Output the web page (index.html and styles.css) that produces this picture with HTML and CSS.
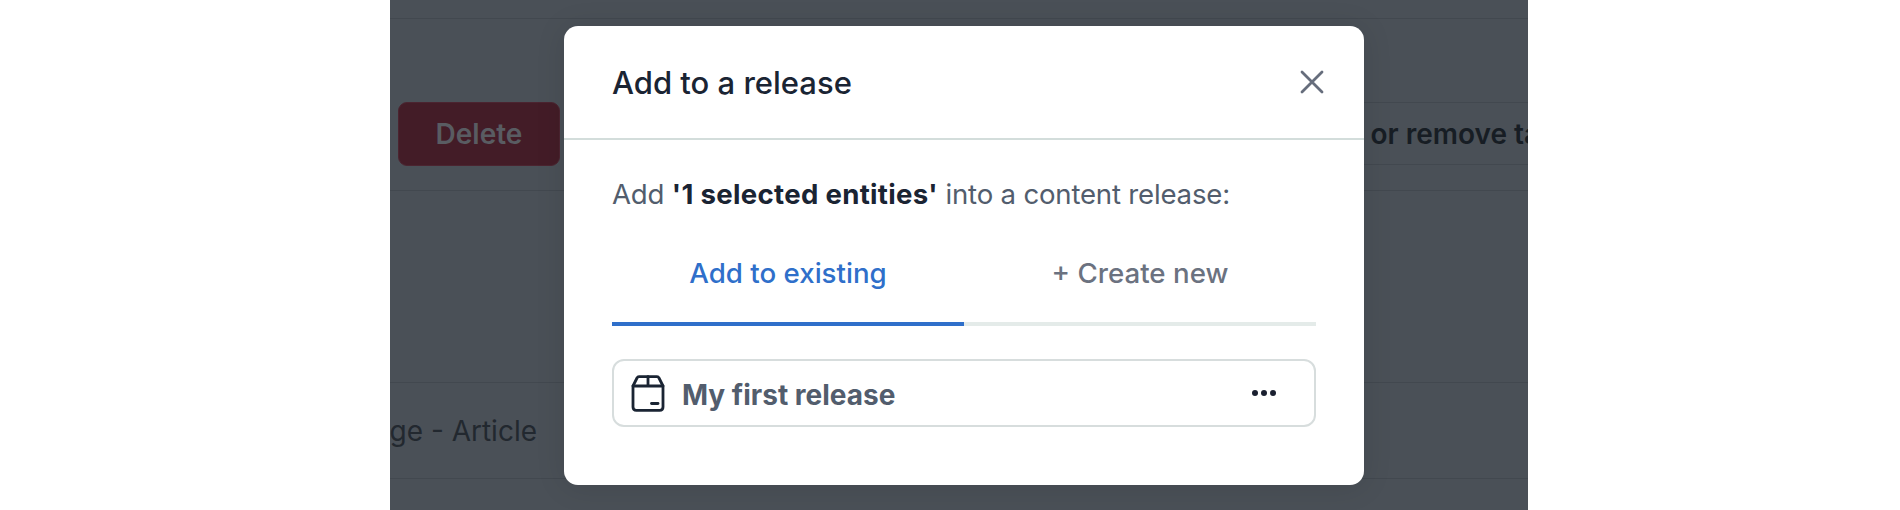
FILE: index.html
```html
<!DOCTYPE html>
<html lang="en">
<head>
<meta charset="utf-8">
<title>Add to a release</title>
<link rel="stylesheet" href="styles.css">
</head>
<body>
<div class="stage">
  <div class="rows">
    <div class="row row-a"></div>
    <div class="row row-b">
      <button class="delete">Delete</button>
      <button class="tags">Add or remove tags</button>
    </div>
    <div class="row row-c"></div>
    <div class="row row-d"><div class="cell"><span>Homepage - Article</span></div></div>
  </div>
  <div class="modal">
    <header class="modal-head">
      <h2>Add to a release</h2>
      <svg class="close" viewBox="0 0 24 24" fill="none" stroke="#666d7c" stroke-width="2.800" stroke-linecap="round"><path d="M2 2 22 22M22 2 2 22"/></svg>
    </header>
    <div class="modal-body">
      <p class="lead">Add <strong>'1 selected entities'</strong> into a content release:</p>
      <div class="tabs">
        <div class="tab active">Add to existing</div>
        <div class="tab">+ Create new</div>
      </div>
      <div class="release">
        <svg class="box" viewBox="0 0 34 37" fill="none" stroke="#1a2433" stroke-width="2.800" stroke-linejoin="round" stroke-linecap="round"><path d="M2 11 6 3Q6.600 1.600 8 1.600H26Q27.400 1.600 28 3L32 11V32Q32 35.400 28.600 35.400H5.400Q2 35.400 2 32Z"/><path d="M2 11H32M17 1.600V11"/><path d="M20.500 28.500H27"/></svg>
        <span class="name">My first release</span>
        <span class="dots"><i></i><i></i><i></i></span>
      </div>
    </div>
  </div>
</div>
</body>
</html>
```
FILE: styles.css
```css
* { box-sizing: border-box; }
html, body { margin: 0; height: 510px; background: #fff; overflow: hidden; }
body { font-family: Inter, "Liberation Sans", sans-serif; }
.stage {
  position: relative;
  width: 1138px;
  height: 510px;
  margin-left: 390px;
  background: #4a5057;
  overflow: hidden;
}
.rows { display: flex; flex-direction: column; }
.row { border-bottom: 1px solid #42484f; }
.row-a { height: 19px; }
.row-b {
  height: 172px;
  display: flex;
  align-items: flex-start;
  justify-content: space-between;
  padding: 83px 0 0 8px;
}
.row-c { height: 192px; }
.row-d { height: 96px; display: flex; align-items: center; }
.delete {
  width: 162px;
  height: 64px;
  background: #431c27;
  border: 1px solid #4b2430;
  border-radius: 9px;
  color: #595c62;
  font: 600 28px Inter, sans-serif;
  padding: 0;
}
.tags {
  flex: none;
  height: 63px;
  margin-right: -45px;
  background: transparent;
  border: 1px solid #42484f;
  border-right: 0;
  color: #171d24;
  font: 600 28px Inter, sans-serif;
  padding: 0 0 0 20px;
  white-space: nowrap;
}
.cell {
  width: 147px;
  display: flex;
  justify-content: flex-end;
  color: #22282f;
  font-size: 28px;
  white-space: nowrap;
}
.modal {
  position: absolute;
  left: 174px;
  top: 26px;
  width: 800px;
  height: 459px;
  background: #fff;
  border-radius: 14px;
  box-shadow: 0 2px 30px rgba(0, 0, 0, 0.1);
}
.modal-head {
  height: 114px;
  padding: 0 40px 0 48px;
  display: flex;
  align-items: center;
  justify-content: space-between;
  border-bottom: 2px solid #d3dddb;
}
.modal-head h2 {
  margin: 0;
  font-size: 31px;
  font-weight: 500;
  color: #1a2433;
}
.close { width: 24px; height: 24px; }
.modal-body { padding: 0 48px; }
.lead {
  margin: 0;
  padding-top: 36px;
  font-size: 27.600px;
  line-height: 36px;
  color: #525d6d;
  letter-spacing: -0.2px;
}
.lead strong { font-weight: 700; color: #1a2433; letter-spacing: 0.300px; }
.tabs { display: flex; margin-top: 35px; }
.tab {
  flex: 1;
  height: 79px;
  padding-top: 8px;
  text-align: center;
  font-size: 27.700px;
  line-height: 36px;
  font-weight: 500;
  color: #6b7280;
  border-bottom: 4px solid #e4ebe9;
}
.tab.active { color: #2f6fca; border-bottom-color: #2f6fca; }
.release {
  margin-top: 33px;
  height: 68px;
  display: flex;
  align-items: center;
  padding: 0 38px 0 17px;
  border: 2px solid #d7dddd;
  border-radius: 12px;
}
.box { width: 34px; height: 37px; flex: none; }
.name {
  margin-left: 17px;
  padding-top: 4px;
  font-size: 28px;
  font-weight: 700;
  color: #525d6d;
}
.dots { margin-left: auto; display: flex; gap: 3px; }
.dots i { width: 6px; height: 6px; border-radius: 50%; background: #1a2030; }
```
